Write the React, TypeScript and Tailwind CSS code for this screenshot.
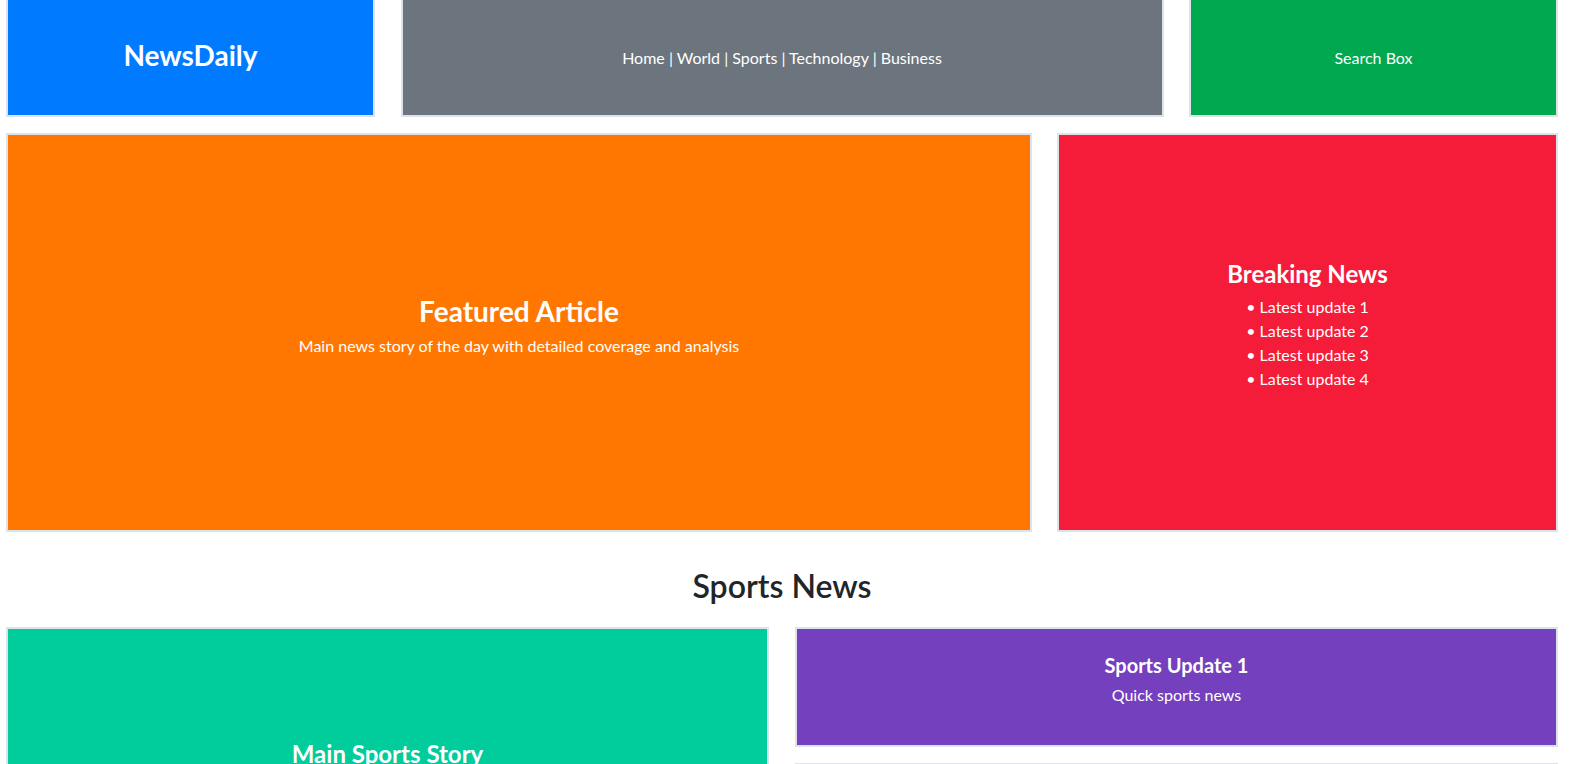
import React from 'react';

const box = 'border-2 border-[#dde3ea] flex flex-col items-center justify-center text-white text-center';

const updates = ['Latest update 1', 'Latest update 2', 'Latest update 3', 'Latest update 4'];

export default function App() {
  return (
    <div className="min-h-screen bg-white font-['Lato','Noto_Sans',sans-serif] pl-[6px] pr-[13px] -mt-[2px] pb-10 text-[#212529]">
      {/* header row */}
      <div className="flex justify-between">
        <div className={`${box} w-[369px] h-[119px] bg-[#007bff] pb-[6px]`}>
          <h1 className="text-[28px] font-bold leading-none">NewsDaily</h1>
        </div>
        <div className={`${box} w-[763px] h-[119px] bg-[#6c757d]`}>
          <p className="text-[16px]">Home | World | Sports | Technology | Business</p>
        </div>
        <div className={`${box} w-[369px] h-[119px] bg-[#00a84f]`}>
          <p className="text-[16px]">Search Box</p>
        </div>
      </div>

      {/* featured row */}
      <div className="flex justify-between mt-[16px]">
        <div className={`${box} w-[1026px] h-[399px] bg-[#ff7700] pb-[13px]`}>
          <h2 className="text-[28px] font-bold leading-[34px]">Featured Article</h2>
          <p className="text-[16px] leading-6 mt-[6px]">
            Main news story of the day with detailed coverage and analysis
          </p>
        </div>
        <div className={`${box} w-[501px] h-[399px] bg-[#f41c38] pb-[15px]`}>
          <h2 className="text-[24px] font-bold leading-[30px] mb-[6px]">Breaking News</h2>
          <ul className="text-[16px] leading-6">
            {updates.map(u => (
              <li key={u}>• {u}</li>
            ))}
          </ul>
        </div>
      </div>

      <h2 className="text-center text-[32px] font-semibold leading-[38px] mt-[35px] mb-[22px]">Sports News</h2>

      {/* sports row */}
      <div className="flex justify-between">
        <div className={`${box} w-[763px] bg-[#00cc9c]`}>
          <h3 className="text-[24px] font-bold leading-[30px] mt-[28px]">Main Sports Story</h3>
          <p className="text-[16px] leading-6 mt-[6px]">Top sports headline with full match report</p>
        </div>
        <div className="w-[763px] flex flex-col gap-[16px]">
          <div className={`${box} h-[120px] bg-[#7440be] pb-[16px]`}>
            <h3 className="text-[20px] font-bold leading-[26px]">Sports Update 1</h3>
            <p className="text-[16px] leading-6 mt-[5px]">Quick sports news</p>
          </div>
          <div className={`${box} h-[120px] bg-[#7440be] pb-[16px]`}>
            <h3 className="text-[20px] font-bold leading-[26px]">Sports Update 2</h3>
            <p className="text-[16px] leading-6 mt-[5px]">Quick sports news</p>
          </div>
        </div>
      </div>
    </div>
  );
}
